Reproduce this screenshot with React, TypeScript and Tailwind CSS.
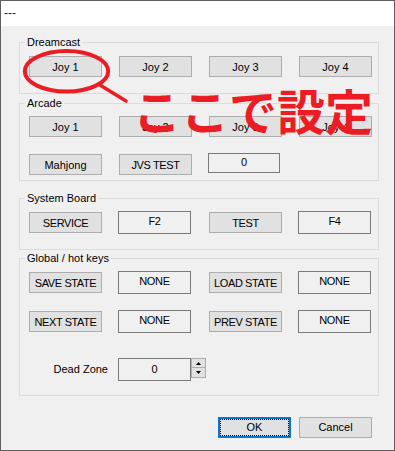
import React from 'react';

const btn =
    'h-[21px] w-full bg-[#e1e1e1] border border-[#adadad] flex items-center justify-center leading-none pt-px';
const box =
    'h-[23px] w-[73px] -ml-px bg-[#f0f0f0] border border-[#7a7a7a] flex items-center justify-center leading-none pb-[2px] tracking-[-0.3px]';

function Group({ title, children, className = '' }: { title: string; children: React.ReactNode; className?: string }) {
    return (
        <fieldset className={`w-[360px] border border-[#dcdcdc] ${className}`}>
            <legend className="ml-[5px] px-[2px] h-[14px] leading-[14px]">{title}</legend>
            {children}
        </fieldset>
    );
}

function Btn({ label, caps }: { label: string; caps?: boolean }) {
    return <div className={`${btn} ${caps ? 'tracking-[-0.4px]' : ''}`}>{label}</div>;
}

function Box({ label }: { label: string }) {
    return <div className={box}>{label}</div>;
}

export default function App() {
    return (
        <div className="relative w-[395px] h-[451px] border border-[#5f5f5f] bg-[#f0f0f0] flex flex-col text-[11px] text-black font-['Liberation_Sans',Arial,sans-serif] overflow-hidden">
            <div className="h-[25px] bg-white flex items-center pl-[3px] pb-[2px] text-[12px] text-[#222]">---</div>

            <div className="flex-1 pl-[18px] pt-[9px]">
                <Group title="Dreamcast">
                    <div className="grid grid-cols-[repeat(4,73px)] gap-x-[17px] pl-[9px] pt-[7px] pb-[16px]">
                        <Btn label="Joy 1" />
                        <Btn label="Joy 2" />
                        <Btn label="Joy 3" />
                        <Btn label="Joy 4" />
                    </div>
                </Group>

                <Group title="Arcade" className="mt-[2px]">
                    <div className="grid grid-cols-[repeat(4,73px)] gap-x-[17px] gap-y-[17px] pl-[9px] pt-[6px] pb-[5px]">
                        <Btn label="Joy 1" />
                        <Btn label="Joy 2" />
                        <Btn label="Joy 3" />
                        <Btn label="Joy 4" />
                        <Btn label="Mahjong" />
                        <Btn label="JVS TEST" caps />
                        <div className="h-[20px] w-[72px] -ml-px -mt-px bg-[#f0f0f0] border border-[#7a7a7a] flex items-center justify-center leading-none pb-px">
                            0
                        </div>
                    </div>
                </Group>

                <Group title="System Board" className="mt-[10px]">
                    <div className="grid grid-cols-[repeat(4,73px)] gap-x-[17px] items-center pl-[9px] pt-[6px] pb-[15px]">
                        <Btn label="SERVICE" caps />
                        <Box label="F2" />
                        <Btn label="TEST" caps />
                        <Box label="F4" />
                    </div>
                </Group>

                <Group title="Global / hot keys" className="mt-px">
                    <div className="pl-[9px] pt-[6px] pb-[14px]">
                        <div className="grid grid-cols-[repeat(4,73px)] gap-x-[17px] gap-y-[16px] items-center">
                            <Btn label="SAVE STATE" caps />
                            <Box label="NONE" />
                            <Btn label="LOAD STATE" caps />
                            <Box label="NONE" />
                            <Btn label="NEXT STATE" caps />
                            <Box label="NONE" />
                            <Btn label="PREV STATE" caps />
                            <Box label="NONE" />
                        </div>
                        <div className="flex items-start mt-[25px]">
                            <div className="w-[79px] h-[23px] mr-[10px] flex items-center justify-end">Dead Zone</div>
                            <div className="h-[23px] w-[73px] bg-[#f0f0f0] border border-[#7a7a7a] flex items-center justify-center leading-none">
                                0
                            </div>
                            <div className="flex flex-col w-[15px]">
                                <div className="h-[10px] border border-[#adadad] bg-[#e1e1e1] flex items-center justify-center">
                                    <svg width="5" height="3" viewBox="0 0 5 3">
                                        <path d="M2.5 0 L5 3 L0 3 Z" fill="#000" />
                                    </svg>
                                </div>
                                <div className="h-[10px] border border-t-0 border-[#adadad] bg-[#e1e1e1] flex items-center justify-center">
                                    <svg width="5" height="3" viewBox="0 0 5 3">
                                        <path d="M0 0 L5 0 L2.5 3 Z" fill="#000" />
                                    </svg>
                                </div>
                            </div>
                        </div>
                    </div>
                </Group>

                <div className="flex gap-[8px] ml-[199px] mt-[21px]">
                    <button className="w-[73px] h-[21px] bg-[#e1e1e1] border-2 border-[#0078d7] outline-1 outline-dotted outline-black -outline-offset-3 flex items-center justify-center leading-none">
                        OK
                    </button>
                    <button className="w-[73px] h-[21px] bg-[#e1e1e1] border border-[#adadad] flex items-center justify-center leading-none">
                        Cancel
                    </button>
                </div>
            </div>

            {/* red annotation drawn over the dialog */}
            <svg className="absolute inset-0 pointer-events-none" width="395" height="451" viewBox="0 0 395 451">
                <ellipse cx="65.5" cy="70.3" rx="41.7" ry="20.3" fill="none" stroke="#ec1c24" strokeWidth="4" />
                <line x1="99" y1="84" x2="125" y2="100" stroke="#ec1c24" strokeWidth="3.5" strokeLinecap="round" />
            </svg>
            <div className="absolute left-[132px] top-[84px] pointer-events-none text-[48px] leading-none font-bold text-[#ec1c24] whitespace-nowrap font-['Noto_Sans_CJK_JP',sans-serif]">
                ここで設定
            </div>
        </div>
    );
}
